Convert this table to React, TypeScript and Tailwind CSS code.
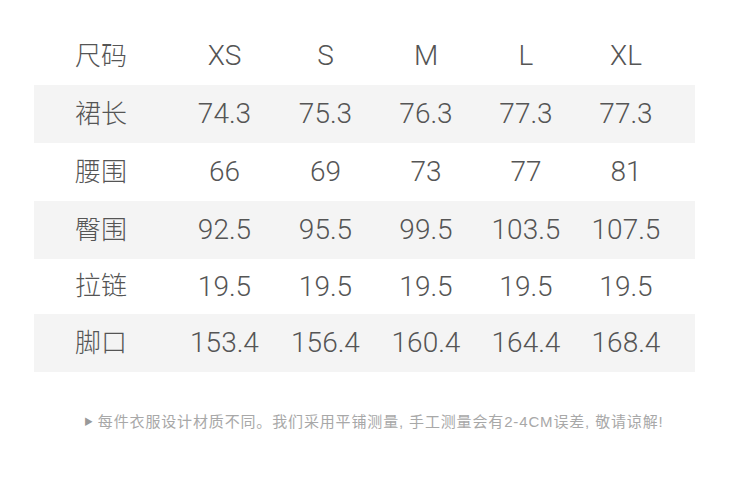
const sizes = ['XS', 'S', 'M', 'L', 'XL'];

const rows: { label: string; values: string[]; h: string }[] = [
  { label: '裙长', values: ['74.3', '75.3', '76.3', '77.3', '77.3'], h: 'h-[58px]' },
  { label: '腰围', values: ['66', '69', '73', '77', '81'], h: 'h-[58px]' },
  { label: '臀围', values: ['92.5', '95.5', '99.5', '103.5', '107.5'], h: 'h-[58px]' },
  { label: '拉链', values: ['19.5', '19.5', '19.5', '19.5', '19.5'], h: 'h-[55px]' },
  { label: '脚口', values: ['153.4', '156.4', '160.4', '164.4', '168.4'], h: 'h-[58px]' },
];

function Row({ label, values, shaded, h }: { label: string; values: string[]; shaded?: boolean; h: string }) {
  return (
    <div
      className={`grid grid-cols-[140px_101px_101px_100px_100px_100px] items-center ${h} ${
        shaded ? 'bg-[#f4f4f4]' : 'bg-white'
      }`}
    >
      <div className="pl-[41px] text-[26px] font-light">{label}</div>
      {values.map((v, i) => (
        <div key={i} className="text-center text-[28px] font-light">
          {v}
        </div>
      ))}
    </div>
  );
}

export default function App() {
  return (
    <div
      className="w-[750px] h-[489px] bg-white pt-[27px] px-[34px] text-[#555]"
      style={{ fontFamily: 'Roboto, "Noto Sans CJK SC", sans-serif' }}
    >
      <div className="w-[661px]">
        <Row label="尺码" values={sizes} h="h-[58px]" />
        {rows.map((r, i) => (
          <Row key={r.label} label={r.label} values={r.values} h={r.h} shaded={i % 2 === 0} />
        ))}
      </div>

      <div className="mt-[38px] pl-[50px] flex items-center gap-[4px] text-[15px] leading-[24px] text-[#a8a8a8] tracking-[0.85px]">
        <span className="text-[9px] text-[#999]">▶</span>
        <span style={{ fontFamily: '"Liberation Sans", "Noto Sans CJK SC", sans-serif' }}>
          每件衣服设计材质不同。我们采用平铺测量, 手工测量会有2-4CM误差, 敬请谅解!
        </span>
      </div>
    </div>
  );
}
